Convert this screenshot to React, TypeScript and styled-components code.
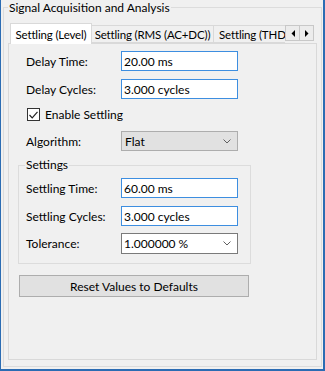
import styled, { createGlobalStyle } from "styled-components";

const GlobalStyle = createGlobalStyle`
  html, body {
    margin: 0;
    padding: 0;
    background: #f0f0f0;
  }
  body {
    font-family: Lato, "Open Sans", sans-serif;
    font-size: 12px;
    color: #000;
  }
  * {
    box-sizing: border-box;
  }
`;

const Window = styled.div`
  width: 325px;
  height: 371px;
  display: flex;
  background: #f0f0f0;
  border-left: 1px solid #2b6cb3;
  border-right: 2px solid #2b6cb3;
  border-bottom: 2px solid #2b6cb3;
  padding: 0 1px 2px 2px;
`;

const GroupBox = styled.fieldset`
  flex: 1;
  min-width: 0;
  margin: 0;
  display: flex;
  flex-direction: column;
  border: 1px solid #dcdcdc;
  padding: 0 4px 6px 4px;
`;

const Legend = styled.legend`
  padding: 0 1px;
  line-height: 15px;
`;

const TabControl = styled.div`
  flex: 1;
  display: flex;
  flex-direction: column;
  margin-top: 8px;
`;

const TabRow = styled.div`
  position: relative;
  z-index: 1;
  height: 21px;
  margin-bottom: -1px;
  padding-left: 2px;
  display: flex;
  align-items: flex-start;
`;

const TabList = styled.div`
  width: 275px;
  height: 21px;
  display: flex;
  align-items: flex-end;
  overflow: hidden;
`;

const Tab = styled.div<{ $active?: boolean; $width?: number }>`
  flex: none;
  width: ${({ $width }) => ($width ? `${$width}px` : "auto")};
  height: ${({ $active }) => ($active ? "21px" : "18px")};
  margin-bottom: ${({ $active }) => ($active ? "0" : "1px")};
  margin-left: ${({ $active }) => ($active ? "0" : "-1px")};
  padding: ${({ $active }) => ($active ? "1px 0 0" : "0")};
  display: flex;
  align-items: center;
  justify-content: center;
  white-space: nowrap;
  font-size: 11.5px;
  letter-spacing: -0.15px;
  background: ${({ $active }) => ($active ? "#ffffff" : "#f0f0f0")};
  border: 1px solid #d9d9d9;
  border-bottom: ${({ $active }) => ($active ? "none" : "1px solid #d9d9d9")};
  &:first-child {
    margin-left: 0;
  }
`;

const ClippedTab = styled(Tab)`
  justify-content: flex-start;
  padding-left: 5px;
  padding-right: 20px;
`;

const Scroller = styled.div`
  display: flex;
  margin-top: 2px;
`;

const ScrollButton = styled.div`
  width: 15px;
  height: 16px;
  display: flex;
  align-items: center;
  justify-content: center;
  background: #ececec;
  border: 1px solid #c8c8c8;
  & + & {
    margin-left: -1px;
  }
`;

const Panel = styled.div`
  flex: 1;
  display: flex;
  flex-direction: column;
  background: #f0f0f0;
  border: 1px solid #d9d9d9;
  padding: 7px 0 0 9px;
`;

const Row = styled.div<{ $gap?: number }>`
  display: grid;
  grid-template-columns: 95px 117px;
  align-items: center;
  height: 20px;
  margin-top: ${({ $gap }) => $gap ?? 0}px;
`;

const OuterRows = styled.div`
  display: flex;
  flex-direction: column;
  padding-left: 8px;
`;

const Label = styled.span`
  white-space: nowrap;
`;

const TextBox = styled.div`
  height: 20px;
  display: flex;
  align-items: center;
  padding-left: 2px;
  background: #fff;
  border: 1px solid #3d8ee0;
  white-space: nowrap;
  overflow: hidden;
`;

const Combo = styled.div<{ $editable?: boolean }>`
  height: ${({ $editable }) => ($editable ? "21px" : "20px")};
  display: flex;
  align-items: center;
  justify-content: space-between;
  padding: 0 6px 0 ${({ $editable }) => ($editable ? "2px" : "3px")};
  background: ${({ $editable }) => ($editable ? "#fff" : "#e1e1e1")};
  border: 1px solid ${({ $editable }) => ($editable ? "#7a7a7a" : "#adadad")};
  white-space: nowrap;
`;

const CheckRow = styled.label`
  display: flex;
  align-items: center;
  gap: 5px;
  height: 13px;
  margin-top: 9px;
  margin-left: 9px;
`;

const CheckBox = styled.span`
  width: 13px;
  height: 13px;
  display: flex;
  align-items: center;
  justify-content: center;
  background: #fff;
  border: 1px solid #333;
`;

const SettingsBox = styled.fieldset`
  width: 233px;
  margin: 6px 0 0 0;
  min-width: 0;
  border: 1px solid #dcdcdc;
  padding: 5px 11px 10px 7px;
  display: flex;
  flex-direction: column;
`;

const SettingsLegend = styled.legend`
  padding: 0 1px;
  margin-left: -1px;
  line-height: 16px;
`;

const Button = styled.button`
  width: 230px;
  height: 22px;
  margin: 11px 0 0 1px;
  font: inherit;
  color: #000;
  background: #e1e1e1;
  border: 1px solid #adadad;
  padding: 0;
`;

const Chevron = () => (
  <svg width="8" height="5" viewBox="0 0 8 5">
    <path d="M0.5 0.5 L4 4 L7.5 0.5" fill="none" stroke="#606060" strokeWidth="1" />
  </svg>
);

const Arrow = ({ left }: { left?: boolean }) => (
  <svg width="4" height="7" viewBox="0 0 4 7">
    <path d={left ? "M4 0 L0.5 3.5 L4 7 Z" : "M0 0 L3.5 3.5 L0 7 Z"} fill="#000" />
  </svg>
);

export default function App() {
  return (
    <>
      <GlobalStyle />
      <Window>
        <GroupBox>
          <Legend>Signal Acquisition and Analysis</Legend>
          <TabControl>
            <TabRow>
              <TabList>
                <Tab $active $width={82}>Settling (Level)</Tab>
                <Tab $width={123}>Settling (RMS (AC+DC))</Tab>
                <ClippedTab>Settling (THD</ClippedTab>
              </TabList>
              <Scroller>
                <ScrollButton>
                  <Arrow left />
                </ScrollButton>
                <ScrollButton>
                  <Arrow />
                </ScrollButton>
              </Scroller>
            </TabRow>
            <Panel>
              <OuterRows>
                <Row>
                  <Label>Delay Time:</Label>
                  <TextBox>20.00 ms</TextBox>
                </Row>
                <Row $gap={8}>
                  <Label>Delay Cycles:</Label>
                  <TextBox>3.000 cycles</TextBox>
                </Row>
              </OuterRows>
              <CheckRow>
                <CheckBox>
                  <svg width="9" height="8" viewBox="0 0 9 8">
                    <path d="M0.5 4 L3.2 6.8 L8.5 0.8" fill="none" stroke="#222" strokeWidth="1.2" />
                  </svg>
                </CheckBox>
                Enable Settling
              </CheckRow>
              <OuterRows>
                <Row $gap={10}>
                  <Label>Algorithm:</Label>
                  <Combo>
                    Flat
                    <Chevron />
                  </Combo>
                </Row>
              </OuterRows>
              <SettingsBox>
                <SettingsLegend>Settings</SettingsLegend>
                <Row>
                  <Label>Settling Time:</Label>
                  <TextBox>60.00 ms</TextBox>
                </Row>
                <Row $gap={8}>
                  <Label>Settling Cycles:</Label>
                  <TextBox>3.000 cycles</TextBox>
                </Row>
                <Row $gap={7}>
                  <Label>Tolerance:</Label>
                  <Combo $editable>
                    1.000000 %
                    <Chevron />
                  </Combo>
                </Row>
              </SettingsBox>
              <Button>Reset Values to Defaults</Button>
            </Panel>
          </TabControl>
        </GroupBox>
      </Window>
    </>
  );
}
